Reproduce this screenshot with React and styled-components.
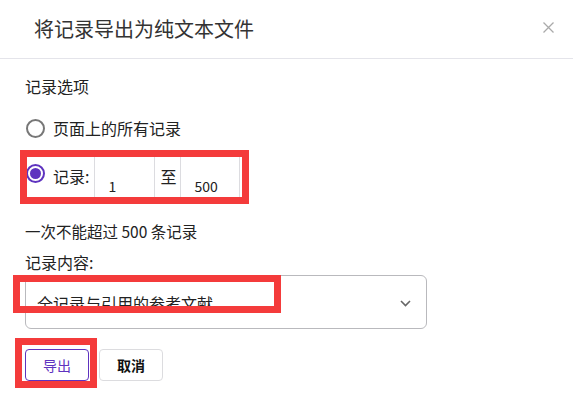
import React from "react";
import styled, { createGlobalStyle } from "styled-components";

const Global = createGlobalStyle`
  html, body { margin: 0; padding: 0; background: #fff; }
  body { font-family: "Noto Sans CJK SC", "Noto Sans", sans-serif; color: #222; }
  * { box-sizing: border-box; }
`;

const Page = styled.div`
  position: relative;
  width: 573px;
  height: 406px;
  overflow: hidden;
  background: #fff;
`;

const Header = styled.div`
  height: 59px;
  display: flex;
  align-items: center;
  justify-content: space-between;
  padding: 0 19px 1px 34px;
  border-bottom: 1px solid #e4e4ea;
`;

const Title = styled.h2`
  margin: 0;
  font-size: 20px;
  font-weight: 400;
  color: #333;
  line-height: 26px;
`;

const Close = styled.button`
  border: 0;
  background: none;
  padding: 0;
  width: 11px;
  height: 11px;
  display: flex;
  align-items: center;
  justify-content: center;
  margin-top: -2px;
`;

const Body = styled.div`
  padding: 0 25px;
`;

const Label = styled.div`
  font-size: ${(p) => p.$fs || 16}px;
  line-height: 22px;
  color: #222;
  margin-top: ${(p) => p.$mt || 0}px;
`;

const RadioRow = styled.label`
  display: flex;
  align-items: ${(p) => (p.$top ? "flex-start" : "center")};
  height: ${(p) => p.$h || 22}px;
  margin-top: ${(p) => p.$mt || 0}px;
  font-size: 16px;
  color: #222;
`;

const Radio = styled.span`
  width: 19px;
  height: 19px;
  border-radius: 50%;
  border: 2px solid ${(p) => (p.$on ? "#5e33bf" : "#777")};
  margin: ${(p) => (p.$on ? "11px 8px 0 1px" : "0 8px 0 1px")};
  flex: none;
  position: relative;
  &::after {
    content: "";
    display: ${(p) => (p.$on ? "block" : "none")};
    position: absolute;
    inset: 2px;
    border-radius: 50%;
    background: #5e33bf;
  }
`;

const RowText = styled.span`
  line-height: 22px;
  margin-top: ${(p) => (p.$top ? 12 : 0)}px;
`;

const NumInput = styled.div`
  width: ${(p) => p.$w}px;
  height: 48px;
  border: 1px solid #dcdce0;
  margin-left: ${(p) => p.$ml || 0}px;
  padding: 22px 0 0 13px;
  font-size: 14px;
  line-height: 20px;
  color: #222;
`;

const To = styled.span`
  margin: 12px 4px 0 5px;
  font-size: 16px;
  line-height: 22px;
`;

const Select = styled.div`
  margin-top: 2px;
  width: 402px;
  height: 54px;
  border: 1px solid #b9b9bd;
  border-radius: 6px;
  display: flex;
  align-items: center;
  justify-content: space-between;
  padding: 2px 15px 0 11px;
  font-size: 16px;
  color: #222;
`;

const Buttons = styled.div`
  display: flex;
  gap: 10px;
  margin-top: 20px;
`;

const Button = styled.button`
  height: 32px;
  width: 64px;
  border-radius: 4px;
  background: #fff;
  font-family: inherit;
  font-size: 14px;
  padding: 0;
  border: 1px solid ${(p) => (p.$primary ? "#5e33bf" : "#dcdcdf")};
  color: ${(p) => (p.$primary ? "#5e33bf" : "#111")};
  font-weight: ${(p) => (p.$primary ? 400 : 700)};
`;

const Mark = styled.div`
  position: absolute;
  left: ${(p) => p.$x}px;
  top: ${(p) => p.$y}px;
  width: ${(p) => p.$w}px;
  height: ${(p) => p.$h}px;
  border: 7px solid #f43b3b;
  pointer-events: none;
`;

export default function App() {
  return (
    <Page>
      <Global />
      <Header>
        <Title>将记录导出为纯文本文件</Title>
        <Close aria-label="关闭">
          <svg width="11" height="11" viewBox="0 0 11 11">
            <path d="M0.5 0.5L10.5 10.5M10.5 0.5L0.5 10.5" stroke="#aaa" strokeWidth="1.3" />
          </svg>
        </Close>
      </Header>
      <Body>
        <Label $mt={16}>记录选项</Label>
        <RadioRow $mt={20}>
          <Radio />
          <RowText>页面上的所有记录</RowText>
        </RadioRow>
        <RadioRow $top $h={48} $mt={14}>
          <Radio $on />
          <RowText $top>记录:</RowText>
          <NumInput $w={61} $ml={5}>1</NumInput>
          <To>至</To>
          <NumInput $w={60}>500</NumInput>
        </RadioRow>
        <Label $mt={19} $fs={15.5}>一次不能超过 500 条记录</Label>
        <Label $mt={9}>记录内容:</Label>
        <Select>
          <span>全记录与引用的参考文献</span>
          <svg width="11" height="7" viewBox="0 0 11 7">
            <path d="M1 1L5.5 5.5L10 1" fill="none" stroke="#666" strokeWidth="1.6" />
          </svg>
        </Select>
        <Buttons>
          <Button $primary>导出</Button>
          <Button>取消</Button>
        </Buttons>
      </Body>
      <Mark $x={20} $y={150} $w={229} $h={54} />
      <Mark $x={13} $y={275} $w={268} $h={38} />
      <Mark $x={15} $y={338} $w={82} $h={50} />
    </Page>
  );
}
